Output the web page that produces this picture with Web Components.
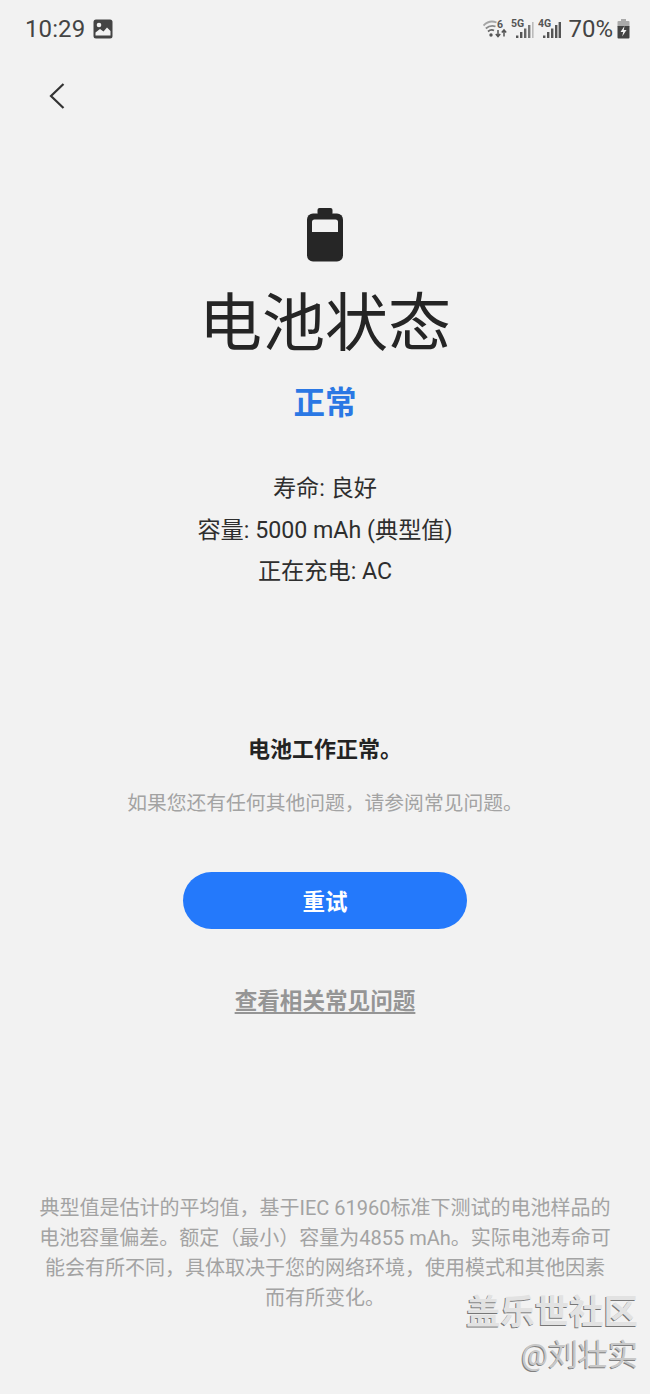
<!DOCTYPE html>
<html lang="zh">
<head>
<meta charset="utf-8">
<title>电池状态</title>
<style>
  html, body { margin: 0; padding: 0; background: #f2f2f2; }
  body {
    width: 650px;
    height: 1394px;
    overflow: hidden;
    font-family: Roboto, "Noto Sans CJK SC", sans-serif;
  }
</style>
</head>
<body>
<battery-page>
  <status-bar slot="top"></status-bar>
  <back-button slot="top"></back-button>
  <battery-summary title-text="电池状态" state="正常"></battery-summary>
  <battery-info>
    <span>寿命: 良好</span>
    <span>容量: 5000 mAh (典型值)</span>
    <span>正在充电: AC</span>
  </battery-info>
  <battery-result heading="电池工作正常。" note="如果您还有任何其他问题，请参阅常见问题。"></battery-result>
  <pill-button>重试</pill-button>
  <faq-link>查看相关常见问题</faq-link>
  <foot-note>典型值是估计的平均值，基于IEC 61960标准下测试的电池样品的<br>电池容量偏差。额定（最小）容量为4855 mAh。实际电池寿命可<br>能会有所不同，具体取决于您的网络环境，使用模式和其他因素<br>而有所变化。</foot-note>
  <water-mark slot="over"></water-mark>
</battery-page>

<script>
const CJK = 'Roboto, "Noto Sans CJK SC", sans-serif';

class BatteryPage extends HTMLElement {
	constructor() {
		super();
		this.attachShadow({ mode: "open" });
		this.shadowRoot.innerHTML = `
        <style>
          :host {
            display: flex;
            flex-direction: column;
            position: relative;
            width: 650px;
            height: 1394px;
            background: #f2f2f2;
            overflow: hidden;
          }
        </style>
        <slot name="top"></slot>
        <slot></slot>
        <slot name="over"></slot>
      `;
	}
}

class StatusBar extends HTMLElement {
	constructor() {
		super();
		this.attachShadow({ mode: "open" });
		this.shadowRoot.innerHTML = `
        <style>
          :host {
            display: flex;
            justify-content: space-between;
            align-items: center;
            height: 58px;
            padding: 0 20px 0 25px;
            color: #444;
            font-family: ${CJK};
          }
          .left, .right { display: flex; align-items: center; }
          .time { font-size: 24px; letter-spacing: 0.1px; }
          .left svg { margin-left: 8px; }
          .pct { font-size: 24px; margin: 0 4px 0 7px; }
          .right svg { display: block; }
          .right .sig { margin-left: 2px; }
          .right .sig + .sig { margin-left: 4px; }
          text { font-family: Roboto, sans-serif; font-weight: 700; fill: #555; }
        </style>
        <div class="left">
          <span class="time">10:29</span>
          <svg width="20" height="20" viewBox="0 0 20 20">
            <rect x="0.5" y="0.5" width="19" height="19" rx="2.5" fill="#444"/>
            <circle cx="6" cy="6" r="2.3" fill="#f2f2f2"/>
            <path d="M2.5 16.5 L2.5 13.5 L7 10 L10.5 12.5 L14 8.5 L17.5 12 L17.5 16.5 Z" fill="#f2f2f2"/>
          </svg>
        </div>
        <div class="right">
          <svg width="26" height="24" viewBox="0 0 26 24">
            <path d="M0.5 8.5 Q6.5 2.5 13.5 5.5" fill="none" stroke="#a5a5a5" stroke-width="1.8"/>
            <path d="M2.8 11.5 Q7.5 7.5 12.5 9.5" fill="none" stroke="#8a8a8a" stroke-width="1.8"/>
            <path d="M5 14.5 Q8 12 11 13.5" fill="none" stroke="#666" stroke-width="1.8"/>
            <circle cx="8" cy="18" r="1.7" fill="#555"/>
            <text x="14" y="10.5" font-size="10.5">6</text>
            <path d="M15 13 V19 M12.8 17 L15 19.5 L17.2 17" fill="none" stroke="#555" stroke-width="1.5"/>
            <path d="M21 19.5 V13.5 M18.8 15.5 L21 13 L23.2 15.5" fill="none" stroke="#555" stroke-width="1.5"/>
          </svg>
          <svg class="sig" width="23" height="24" viewBox="0 0 23 24">
            <text x="0" y="9.5" font-size="10.5">5G</text>
            <rect x="5" y="18.5" width="2.4" height="2.5" fill="#555"/>
            <rect x="9" y="15" width="2.4" height="6" fill="#555"/>
            <rect x="13" y="11.5" width="2.4" height="9.5" fill="#666"/>
            <rect x="17" y="8" width="2.4" height="13" fill="#777"/>
            <rect x="21" y="5" width="1.6" height="16" fill="#bbb"/>
          </svg>
          <svg class="sig" width="23" height="24" viewBox="0 0 23 24">
            <text x="0" y="9.5" font-size="10.5">4G</text>
            <rect x="5" y="18.5" width="2.4" height="2.5" fill="#555"/>
            <rect x="9" y="15" width="2.4" height="6" fill="#555"/>
            <rect x="13" y="11.5" width="2.4" height="9.5" fill="#555"/>
            <rect x="17" y="8" width="2.4" height="13" fill="#555"/>
            <rect x="20.6" y="5" width="2.4" height="16" fill="#555"/>
          </svg>
          <span class="pct">70%</span>
          <svg width="13" height="20" viewBox="0 0 13 20">
            <rect x="4" y="0" width="5" height="2" fill="#aaa"/>
            <rect x="0.5" y="2" width="12" height="6" rx="1" fill="#aaa"/>
            <path d="M0.5 7 H12.5 V18.5 A1 1 0 0 1 11.5 19.5 H1.5 A1 1 0 0 1 0.5 18.5 Z" fill="#444"/>
            <path d="M7.5 7 L3.5 13 H6.2 L5.2 17.5 L9.5 11 H6.8 Z" fill="#f2f2f2"/>
          </svg>
        </div>
      `;
	}
}

class BackButton extends HTMLElement {
	constructor() {
		super();
		this.attachShadow({ mode: "open" });
		this.shadowRoot.innerHTML = `
        <style>
          :host {
            display: block;
            height: 26px;
            padding: 25px 0 0 49px;
          }
          svg { display: block; }
        </style>
        <svg width="16" height="26" viewBox="0 0 16 26">
          <path d="M14.5 1 L2 13 L14.5 25" fill="none" stroke="#333" stroke-width="2.2"/>
        </svg>
      `;
	}
}

class BatterySummary extends HTMLElement {
	constructor() {
		super();
		this.attachShadow({ mode: "open" });
		this.shadowRoot.innerHTML = `
        <style>
          :host {
            display: flex;
            flex-direction: column;
            align-items: center;
            margin-top: 99px;
            font-family: ${CJK};
          }
          svg { display: block; }
          .title {
            font-size: 63px;
            line-height: 72px;
            margin-top: 26px;
            color: #252525;
            font-weight: 400;
          }
          .state {
            font-size: 31.5px;
            line-height: 40px;
            margin-top: 24px;
            font-weight: 700;
            color: #2b78e4;
          }
        </style>
        <svg width="36" height="54" viewBox="0 0 36 54">
          <rect x="10.5" y="0" width="15" height="7" rx="2" fill="#262626"/>
          <rect x="0" y="5.5" width="36" height="48" rx="6" fill="#262626"/>
          <path d="M5 24 V14 A2.5 2.5 0 0 1 7.5 11.5 H28.5 A2.5 2.5 0 0 1 31 14 V24 Z" fill="#f2f2f2"/>
        </svg>
        <div class="title"></div>
        <div class="state"></div>
      `;
		this.shadowRoot.querySelector(".title").textContent = this.getAttribute("title-text");
		this.shadowRoot.querySelector(".state").textContent = this.getAttribute("state");
	}
}

class BatteryInfo extends HTMLElement {
	constructor() {
		super();
		this.attachShadow({ mode: "open" });
		this.shadowRoot.innerHTML = `
        <style>
          :host {
            display: flex;
            flex-direction: column;
            align-items: center;
            margin-top: 44px;
            font-family: ${CJK};
            font-size: 23.2px;
            line-height: 41.5px;
            color: #2e2e2e;
          }
          ::slotted(span) { display: block; }
        </style>
        <slot></slot>
      `;
	}
}

class BatteryResult extends HTMLElement {
	constructor() {
		super();
		this.attachShadow({ mode: "open" });
		this.shadowRoot.innerHTML = `
        <style>
          :host {
            display: flex;
            flex-direction: column;
            align-items: center;
            margin-top: 142px;
            font-family: ${CJK};
          }
          .head {
            font-size: 22px;
            line-height: 30px;
            font-weight: 700;
            color: #232323;
          }
          .note {
            font-size: 19.8px;
            line-height: 30px;
            margin-top: 24px;
            color: #a3a3a3;
          }
        </style>
        <div class="head"></div>
        <div class="note"></div>
      `;
		this.shadowRoot.querySelector(".head").textContent = this.getAttribute("heading");
		this.shadowRoot.querySelector(".note").textContent = this.getAttribute("note");
	}
}

class PillButton extends HTMLElement {
	constructor() {
		super();
		this.attachShadow({ mode: "open" });
		this.shadowRoot.innerHTML = `
        <style>
          :host {
            display: flex;
            align-items: center;
            justify-content: center;
            align-self: center;
            width: 284px;
            height: 57px;
            margin-top: 53px;
            border-radius: 29px;
            background: #2479fb;
            color: #fff;
            font-family: ${CJK};
            font-size: 22.5px;
            font-weight: 700;
          }
        </style>
        <slot></slot>
      `;
	}
}

class FaqLink extends HTMLElement {
	constructor() {
		super();
		this.attachShadow({ mode: "open" });
		this.shadowRoot.innerHTML = `
        <style>
          :host {
            display: block;
            align-self: center;
            margin-top: 56px;
            line-height: 34px;
            font-family: ${CJK};
            font-size: 22.6px;
            font-weight: 700;
            color: #959595;
            text-decoration: underline;
            text-underline-offset: 3px;
          }
        </style>
        <slot></slot>
      `;
	}
}

class FootNote extends HTMLElement {
	constructor() {
		super();
		this.attachShadow({ mode: "open" });
		this.shadowRoot.innerHTML = `
        <style>
          :host {
            display: block;
            margin-top: 174px;
            text-align: center;
            font-family: ${CJK};
            font-size: 20px;
            line-height: 30px;
            color: #a3a3a3;
            white-space: nowrap;
          }
        </style>
        <slot></slot>
      `;
	}
}

// overlay stamp in the corner of the screenshot
class WaterMark extends HTMLElement {
	constructor() {
		super();
		this.attachShadow({ mode: "open" });
		this.shadowRoot.innerHTML = `
        <style>
          :host {
            position: absolute;
            right: 12px;
            bottom: 19px;
            display: flex;
            flex-direction: column;
            align-items: flex-end;
            font-family: ${CJK};
          }
          .site {
            font-size: 34.4px;
            line-height: 44px;
            font-weight: 700;
            color: #e2e2e2;
            text-shadow: -1px 1px 0 #777;
          }
          .user {
            font-size: 30px;
            line-height: 40px;
            margin-top: 1px;
            color: #c8c8c8;
            text-shadow: -1px 1px 0 #808080;
          }
        </style>
        <div class="site">盖乐世社区</div>
        <div class="user">@刘壮实</div>
      `;
	}
}

customElements.define("battery-page", BatteryPage);
customElements.define("status-bar", StatusBar);
customElements.define("back-button", BackButton);
customElements.define("battery-summary", BatterySummary);
customElements.define("battery-info", BatteryInfo);
customElements.define("battery-result", BatteryResult);
customElements.define("pill-button", PillButton);
customElements.define("faq-link", FaqLink);
customElements.define("foot-note", FootNote);
customElements.define("water-mark", WaterMark);
</script>
</body>
</html>
